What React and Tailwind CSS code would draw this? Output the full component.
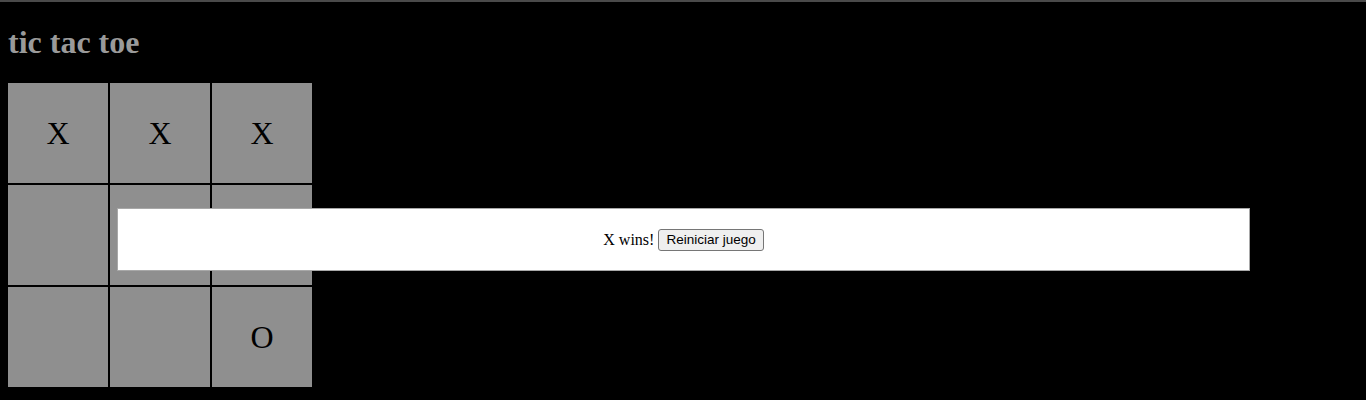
import React from 'react';

const board = ['X', 'X', 'X', '', '', '', '', '', 'O'];

const App = () => {
  return (
    <div className="relative h-[400px] bg-black overflow-hidden">
      {/* barra superior */}
      <div className="h-[2px] bg-[#4a4a4a]" />

      <div className="px-2">
        <h1 className="mt-[22px] text-[32px] leading-[37px] font-bold text-[#9a9a9a] font-['Liberation_Serif',serif]">
          tic tac toe
        </h1>

        {/* Tablero */}
        <div className="mt-[22px] grid grid-cols-[repeat(3,100px)] gap-[2px] w-fit">
          {board.map((cell, i) => (
            <div
              key={i}
              className="w-[100px] h-[100px] bg-[#8f8f8f] flex items-center justify-center text-[32px] text-black font-['Liberation_Serif',serif]"
            >
              {cell}
            </div>
          ))}
        </div>
      </div>

      {/* Mensaje de ganador */}
      <div className="absolute left-[117px] top-[208px] w-[1133px] h-[63px] bg-white border border-[#a8a8a8] flex items-center justify-center text-[16px] text-black font-['Liberation_Serif',serif]">
        <span>X wins!</span>
        <button className="ml-[4px] px-[7px] py-[1px] h-[22px] bg-[#efefef] border border-[#767676] rounded-[3px] text-[13.5px] leading-[18px] text-black font-['Liberation_Sans',Arial,sans-serif]">
          Reiniciar juego
        </button>
      </div>
    </div>
  );
};

export default App;
